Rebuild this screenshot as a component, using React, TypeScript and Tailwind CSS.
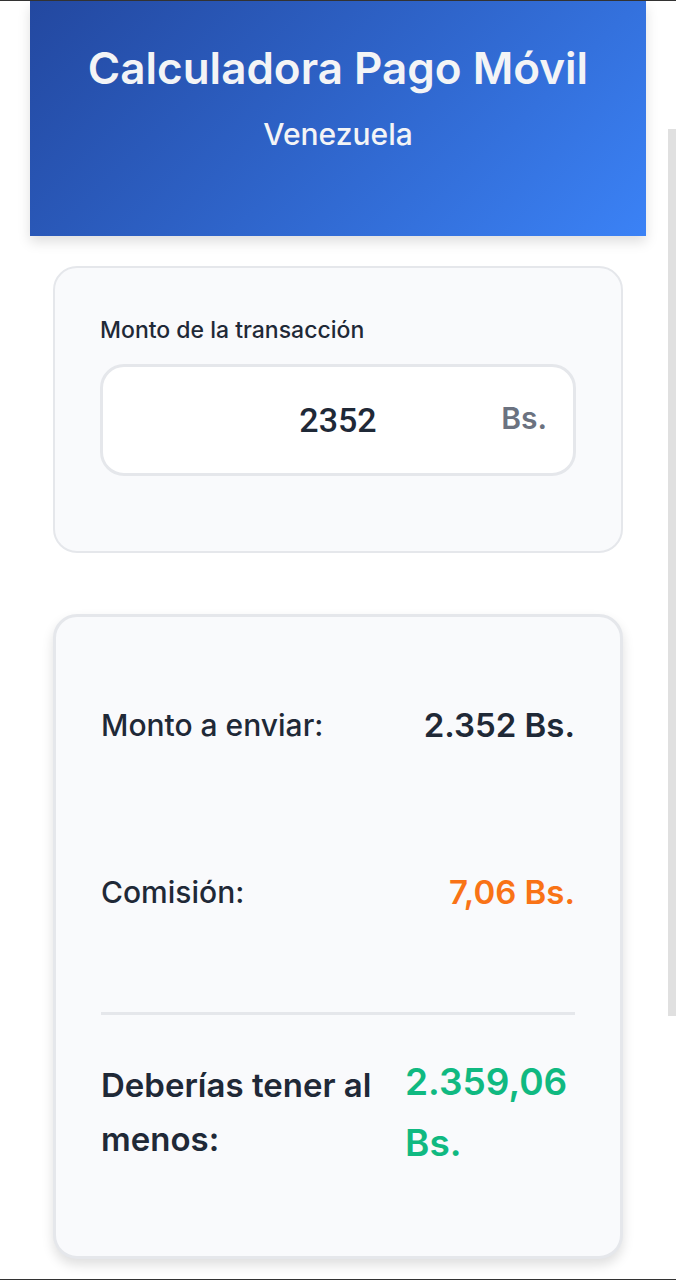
import { useState } from "react";

const format = (n: number) =>
  n.toLocaleString("de-DE", { maximumFractionDigits: 2, useGrouping: true });

export default function App() {
  const [amount, setAmount] = useState("2352");
  const value = Number(amount) || 0;
  const fee = Math.round(value * 0.3) / 100;

  return (
    <div className="relative min-h-screen border-y border-[#333] bg-white px-[30px] font-['Inter',sans-serif] font-medium text-[#1f2937]">
      <header className="h-[235px] bg-linear-135 from-[#2348a0] to-[#3b82f6] pt-[35px] text-center text-[#f3f4f6] shadow-[0_6px_12px_rgba(0,0,0,0.13)]">
        <h1 className="text-[44px] leading-[64px] font-semibold">Calculadora Pago Móvil</h1>
        <p className="mt-4 text-[30px] leading-9">Venezuela</p>
      </header>
      <main className="px-[23px] pt-[30px] pb-5">
        <section className="rounded-3xl border-2 border-[#e5e7eb] bg-[#f9fafc] px-[45px] pt-[46px] pb-[75px]">
          <label htmlFor="amount" className="block text-[23px] leading-8">
            Monto de la transacción
          </label>
          <div className="mt-[18px] flex h-28 items-center rounded-3xl border-[3px] border-[#e5e7eb] bg-white px-[26px]">
            <input
              id="amount"
              inputMode="decimal"
              value={amount}
              onChange={(e) => setAmount(e.target.value)}
              className="ml-14 w-0 flex-1 bg-transparent text-center font-['Roboto',sans-serif] text-[34px] leading-12 font-medium outline-none"
            />
            <span className="w-14 pb-1 text-right text-[30px] font-semibold text-[#6b7280]">Bs.</span>
          </div>
        </section>
        <section className="mt-[61px] rounded-3xl border-[3px] border-[#e5e7eb] bg-[#f9fafc] px-[45px] pt-[84px] pb-[83px] shadow-[0_6px_12px_rgba(0,0,0,0.13)]">
          <div className="flex items-center justify-between leading-[48px]">
            <span className="text-[30px]">Monto a enviar:</span>
            <span className="text-[33px] font-semibold">{format(value)} Bs.</span>
          </div>
          <div className="mt-[119px] flex items-center justify-between leading-[48px]">
            <span className="text-[30px]">Comisión:</span>
            <span className="text-[33px] font-semibold text-[#f97316]">{format(fee)} Bs.</span>
          </div>
          <div className="mt-24 flex items-center justify-between border-t-[3px] border-[#e5e7eb] pt-9">
            <span className="w-[290px] text-[33px] leading-[54px] font-semibold">Deberías tener al menos:</span>
            <span className="w-[170px] text-[37px] leading-[61px] font-semibold text-[#10b981]">
              {format(value + fee)} Bs.
            </span>
          </div>
        </section>
      </main>
      <div className="absolute top-32 right-0 h-[887px] w-2 bg-[#e0e0e0]" />
    </div>
  );
}
